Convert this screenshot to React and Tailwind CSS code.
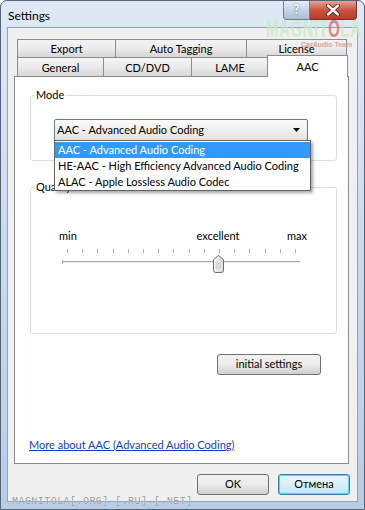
import React from "react";

const font = { fontFamily: 'Lato, "Noto Sans", sans-serif' };

function Tab({ w, children, last }) {
  return (
    <div
      className={`h-full flex items-center justify-center border-t border-l border-[#898c95] bg-gradient-to-b from-[#f4f4f4] via-[#ebebeb] to-[#d6d6d6] ${last ? "border-r" : ""}`}
      style={{ width: w }}
    >
      {children}
    </div>
  );
}

function Slider() {
  const ticks = Array.from({ length: 16 }, (_, i) => 5 + i * 15.2);
  return (
    <svg width="240" height="28" viewBox="0 0 240 28" className="block">
      {ticks.map((x, i) => (
        <line key={i} x1={Math.round(x) + 0.5} x2={Math.round(x) + 0.5} y1="2" y2="6" stroke="#b0b0b0" strokeWidth="1" />
      ))}
      <line x1="0" x2="238" y1="14.5" y2="14.5" stroke="#a8a8a8" />
      <line x1="0" x2="238" y1="15.5" y2="15.5" stroke="#e8e8e8" />
      <line x1="0.5" x2="0.5" y1="13" y2="17" stroke="#a8a8a8" />
      <defs>
        <linearGradient id="th" x1="0" x2="1" y1="0" y2="0">
          <stop offset="0" stopColor="#f6f6f6" />
          <stop offset="1" stopColor="#d2d2d2" />
        </linearGradient>
      </defs>
      <path d="M151.5 12.5 L156.5 8.5 L161.5 12.5 L161.5 23.5 Q161.5 25.5 159.5 25.5 L153.5 25.5 Q151.5 25.5 151.5 23.5 Z" fill="url(#th)" stroke="#707070" />
      <rect x="153.5" y="14.5" width="6" height="8" fill="#d8d8d8" stroke="#e8e8e8" />
    </svg>
  );
}

export default function App() {
  return (
    <div className="w-[365px] h-[510px] bg-white" style={font}>
      <div className="relative w-[365px] h-[510px] overflow-hidden rounded-t-[7px] border border-[#54657a] bg-gradient-to-b from-[#dfe9f5] via-[#c9daee] to-[#b7cde6] text-[11px] text-black">
        {/* title bar */}
        <div className="flex items-start h-[26px]">
          <div className="mt-[6px] ml-[7px] text-[12px] leading-[18px] text-black">Settings</div>
          <div className="ml-auto mr-[7px] flex">
            <div className="w-[27px] h-[19px] rounded-bl-[4px] border border-t-0 border-[#6f7f92] bg-gradient-to-b from-[#e7eef7] via-[#c4d4e6] to-[#a9bfd8] flex items-center justify-center text-[13px] font-bold text-white [text-shadow:0_0_2px_#3d5670]">
              ?
            </div>
            <div className="w-[47px] h-[19px] rounded-br-[4px] border border-t-0 border-l-0 border-[#6b3434] bg-gradient-to-b from-[#e8a395] via-[#c95343] to-[#b93c2c] flex items-center justify-center">
              <svg width="14" height="12" viewBox="0 0 14 12">
                <path d="M2 1.5 L12 10.5 M12 1.5 L2 10.5" stroke="#4a1a14" strokeWidth="4" strokeLinecap="round" />
                <path d="M2 1.5 L12 10.5 M12 1.5 L2 10.5" stroke="#ffffff" strokeWidth="2.4" strokeLinecap="round" />
              </svg>
            </div>
          </div>
        </div>

        {/* client area */}
        <div className="ml-[6px] w-[351px] h-[475px] border border-[#8fa4bc] bg-[#f0f0f0] pt-[11px] pl-[6px]">
          {/* tabs */}
          <div className="ml-[3px] flex h-[18px] leading-none">
            <Tab w={98}>Export</Tab>
            <Tab w={131}>Auto Tagging</Tab>
            <Tab w={101} last>License</Tab>
          </div>
          <div className="ml-[3px] flex items-end h-[19px] leading-none">
            <Tab w={86}>General</Tab>
            <Tab w={88}>CD/DVD</Tab>
            <Tab w={77}>LAME</Tab>
            <div className="relative z-10 w-[81px] h-[22px] mb-[-1px] -ml-px border-t border-l border-r border-[#898c95] bg-white flex items-start justify-center pt-[5px]">
              AAC
            </div>
          </div>

          {/* panel */}
          <div className="relative w-[335px] h-[388px] border border-[#898c95] bg-white">
            {/* Mode */}
            <div className="relative mt-[18px] ml-[15px] w-[307px] h-[66px] rounded-[3px] border border-[#d5dfe5] pt-[23px] pl-[23px]">
              <div className="absolute -top-[9px] left-[3px] px-[2px] bg-white leading-[16px]">Mode</div>
              <div className="w-[254px] h-[22px] rounded-[2px] border border-[#5f7d99] bg-gradient-to-b from-[#fbfbfb] via-[#f0f0f0] to-[#e2e2e2] flex items-center pl-[2px] pr-[7px]">
                <span>AAC - Advanced Audio Coding</span>
                <svg className="ml-auto" width="7" height="4" viewBox="0 0 7 4">
                  <path d="M0 0 H7 L3.5 4 Z" fill="#000" />
                </svg>
              </div>
            </div>

            {/* Quality */}
            <div className="relative mt-[26px] ml-[15px] w-[307px] h-[147px] rounded-[3px] border border-[#d5dfe5] pt-[40px] pl-[28px]">
              <div className="absolute -top-[9px] left-[3px] px-[2px] bg-white leading-[16px]">Quality</div>
              <div className="relative w-[248px] h-[16px] flex justify-between leading-[16px]">
                <span>min</span>
                <span className="absolute left-[159px] -translate-x-1/2">excellent</span>
                <span>max</span>
              </div>
              <div className="mt-[3px] -ml-[28px] pl-[31px]">
                <Slider />
              </div>
            </div>

            {/* initial settings */}
            <div className="mt-[20px] ml-[202px] w-[104px] h-[21px] rounded-[3px] border border-[#707070] bg-gradient-to-b from-[#f2f2f2] via-[#ebebeb] to-[#cfcfcf] flex items-center justify-center">
              initial settings
            </div>

            {/* link */}
            <div className="mt-[62px] ml-[14px] leading-[16px] text-[#1a3cbf] underline">
              More about AAC (Advanced Audio Coding)
            </div>

            {/* dropdown list */}
            <div className="absolute left-[39px] top-[63px] w-[257px] h-[51px] border border-[#646464] bg-white py-px shadow-[2px_2px_3px_rgba(0,0,0,0.35)] leading-[16px] whitespace-nowrap">
              <div className="h-[16px] bg-[#3399ff] text-white pl-[3px]">AAC - Advanced Audio Coding</div>
              <div className="h-[16px] pl-[3px]">HE-AAC - High Efficiency Advanced Audio Coding</div>
              <div className="h-[16px] pl-[3px]">ALAC - Apple Lossless Audio Codec</div>
            </div>
          </div>

          {/* bottom buttons */}
          <div className="w-[336px] mt-[10px] flex justify-end gap-[9px]">
            <div className="w-[72px] h-[21px] rounded-[3px] border border-[#707070] bg-gradient-to-b from-[#f2f2f2] via-[#ebebeb] to-[#cfcfcf] flex items-center justify-center">
              OK
            </div>
            <div className="w-[72px] h-[21px] rounded-[3px] border border-[#3c7fb1] bg-gradient-to-b from-[#eaf6fd] via-[#d9f0fc] to-[#bee6fd] flex items-center justify-center shadow-[inset_0_0_0_1px_#48d8fb]">
              Отмена
            </div>
          </div>
        </div>

        {/* watermarks */}
        <div className="absolute left-[265px] top-[16px] pointer-events-none whitespace-nowrap">
          <div className="origin-left scale-x-[0.62] text-[24px] font-bold leading-[24px] tracking-[1px] text-[#c9ecc4] opacity-80" style={{ fontFamily: '"Liberation Sans", sans-serif' }}>
            MAGNIT<span className="text-[#e06a6a]">O</span>LA
          </div>
          <div className="ml-[35px] text-[7px] font-bold leading-[8px] text-[#d99a9a] opacity-90" style={{ fontFamily: '"Liberation Sans", sans-serif' }}>
            CarAudio Team
          </div>
        </div>
        <div className="absolute left-[11px] top-[495px] whitespace-nowrap text-[10px] tracking-[0.45px] leading-[12px] text-[#9a9a9a] [text-shadow:0_0_1px_#ffffff]" style={{ fontFamily: '"Liberation Mono", monospace' }}>
          MAGNITOLA[.ORG] [.RU] [.NET]
        </div>
      </div>
    </div>
  );
}
